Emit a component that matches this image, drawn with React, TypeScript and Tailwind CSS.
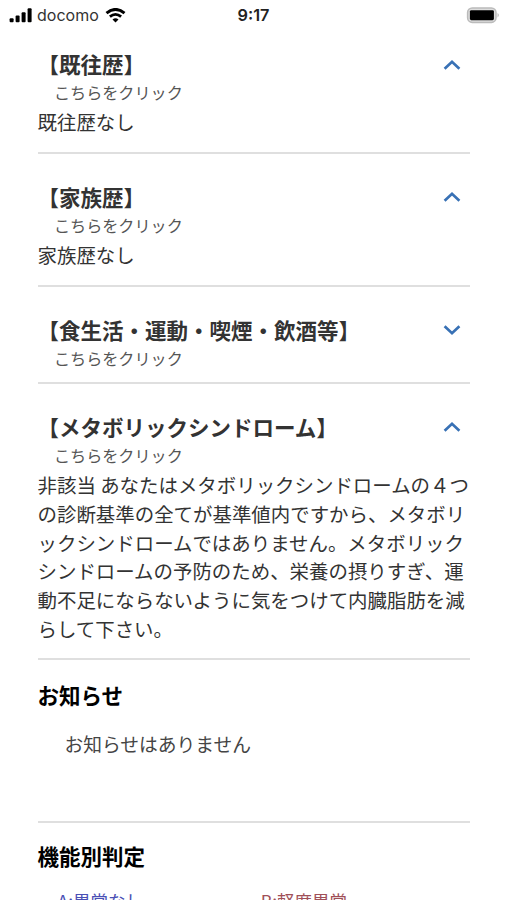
import { useState } from 'react'
import type { ReactNode } from 'react'

interface Section {
  id: string
  title: string
  body: string
  open: boolean
}

const initialSections: Section[] = [
  { id: 'history', title: '【既往歴】', body: '既往歴なし', open: true },
  { id: 'family', title: '【家族歴】', body: '家族歴なし', open: true },
  { id: 'lifestyle', title: '【食生活・運動・喫煙・飲酒等】', body: '', open: false },
  {
    id: 'metabolic',
    title: '【メタボリックシンドローム】',
    body: '非該当 あなたはメタボリックシンドロームの４つの診断基準の全てが基準値内ですから、メタボリックシンドロームではありません。メタボリックシンドロームの予防のため、栄養の摂りすぎ、運動不足にならないように気をつけて内臓脂肪を減らして下さい。',
    open: true,
  },
]

function StatusBar() {
  return (
    <header className="grid h-[30px] grid-cols-3 items-center pr-[7px] pl-[9px] font-['Inter','Liberation_Sans',sans-serif]">
      <div className="flex items-center">
        <svg className="h-[15px] w-[24px]" viewBox="0 0 24 15">
          <rect x="0.6" y="10.2" width="4" height="4" rx="1" />
          <rect x="6.6" y="7.6" width="4" height="6.6" rx="1" />
          <rect x="12.6" y="4.2" width="4" height="10" rx="1" />
          <rect x="18.6" y="0.2" width="4" height="14" rx="1" />
        </svg>
        <span className="ml-[4px] text-[16px] leading-[30px] text-[#333]">docomo</span>
        <svg className="ml-[6px] h-[15px] w-[21px]" viewBox="0 0 20 15" fill="none" stroke="#000">
          <path d="M1 5.2 Q10 -2.4 19 5.2" strokeWidth="2.9" />
          <path d="M4.4 8.7 Q10 4.1 15.6 8.7" strokeWidth="2.8" />
          <path d="M10 14.5 L7 11.5 Q10 9.1 13 11.5 Z" fill="#000" stroke="none" />
        </svg>
      </div>
      <div className="-ml-[2px] text-center text-[16.3px] leading-[30px] font-semibold text-[#222]">9:17</div>
      <div className="flex justify-end">
        <svg className="h-[17px] w-[34px]" viewBox="0 0 34 17">
          <rect x="1.6" y="1" width="28.4" height="14.4" rx="4.6" fill="#ddd" stroke="#bbb" strokeWidth="1.5" />
          <rect x="3.9" y="3.2" width="24" height="10" rx="1.4" fill="#000" />
          <path d="M31.6 6 Q33.8 8.2 31.6 10.4 Z" fill="#aaa" />
        </svg>
      </div>
    </header>
  )
}

function Chevron({ open }: { open: boolean }) {
  return (
    <svg
      className={`mt-[1.5px] h-[12px] w-[18px] ${open ? '' : 'rotate-180'}`}
      viewBox="0 0 18 12"
      fill="none"
      stroke="#3871b5"
      strokeWidth="2.7"
    >
      <path d="M1.6 9.8 L9 2.8 L16.4 9.8" />
    </svg>
  )
}

function Heading({ children }: { children: ReactNode }) {
  return <h2 className="text-[21.5px] leading-[29px] font-bold text-black">{children}</h2>
}

export default function App() {
  const [sections, setSections] = useState<Section[]>(initialSections)

  const toggle = (id: string) => {
    setSections(sections.map(s => (s.id === id ? { ...s, open: !s.open } : s)))
  }

  return (
    <div
      lang="ja"
      className="h-[900px] overflow-hidden bg-white font-['Noto_Sans_CJK_JP',sans-serif] text-[19.45px] text-[#333]"
    >
      <StatusBar />

      <main className="-mt-[9px] mr-[37px] ml-[37.5px]">
        {sections.map(section => (
          <section key={section.id} className="border-b-2 border-[#dfdfdf] pt-[28.3px] pb-[9px]">
            <button className="block w-full text-left" onClick={() => toggle(section.id)}>
              <span className="flex items-center justify-between pr-[9px]">
                <span className="text-[21.5px] leading-[29px] font-bold">{section.title}</span>
                <Chevron open={section.open} />
              </span>
              <span className="block pl-[16.5px] text-[16.1px] leading-[28.8px] text-[#555]">
                こちらをクリック
              </span>
            </button>
            {section.open && section.body && (
              <p className="mt-[1.4px] mb-[5.6px] leading-[28.7px]">{section.body}</p>
            )}
          </section>
        ))}

        {/* Notices */}
        <section className="border-b-2 border-[#dfdfdf] pt-[19.6px] pb-[63px]">
          <Heading>お知らせ</Heading>
          <p className="mt-[20px] pl-[27px] text-[18.75px] leading-[29px] text-[#444]">お知らせはありません</p>
        </section>

        {/* Results by function */}
        <section className="pt-[18px]">
          <Heading>機能別判定</Heading>
          <div className="mt-[16px] grid grid-cols-2 pl-[20px] text-[17.5px] leading-[29px]">
            <span className="text-[#4a50b5]">A:異常なし</span>
            <span className="-ml-[3px] text-[#a05058]">B:軽度異常</span>
          </div>
        </section>
      </main>
    </div>
  )
}
